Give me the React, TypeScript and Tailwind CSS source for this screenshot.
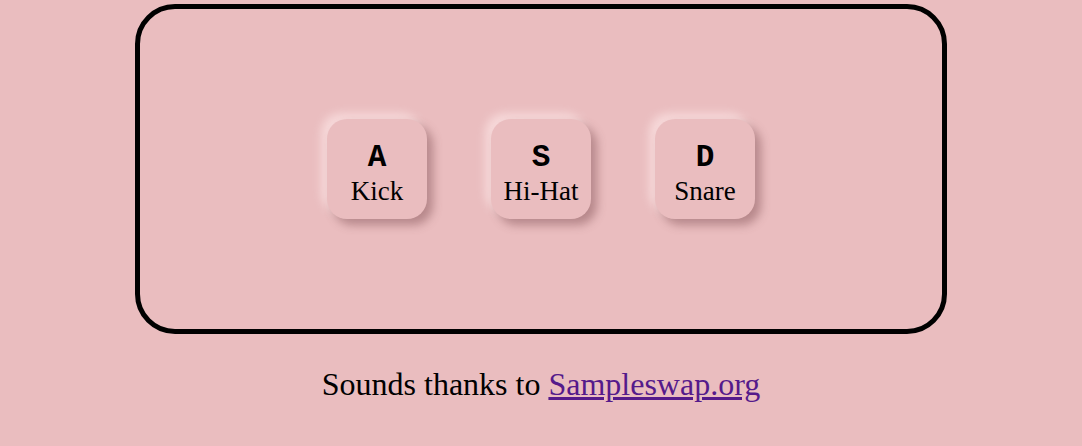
import React from 'react';

const pads = [
  { key: 'A', label: 'Kick' },
  { key: 'S', label: 'Hi-Hat' },
  { key: 'D', label: 'Snare' },
];

export default function App() {
  return (
    <div className="min-h-[446px] w-full bg-[#eabdbf] pt-[4px] font-['Liberation_Serif',serif] text-black">
      <div className="mx-auto flex h-[330px] w-[812px] items-center justify-center gap-[64px] rounded-[40px] border-[5px] border-black">
        {pads.map((p) => (
          <div
            key={p.key}
            className="flex h-[100px] w-[100px] flex-col items-center justify-center rounded-[20px] bg-[#eabdbf] pt-[12px] shadow-[6px_6px_10px_rgba(120,70,75,0.45),-6px_-6px_10px_rgba(255,235,235,0.6)]"
          >
            <span className="font-['Liberation_Mono',monospace] text-[31px] font-bold leading-[32px]">{p.key}</span>
            <span className="text-[27px] leading-[34px]">{p.label}</span>
          </div>
        ))}
      </div>
      <p className="mt-[28px] text-center text-[32px] leading-[44px]">
        Sounds thanks to{' '}
        <a href="#" className="text-[#551a8b] underline">Sampleswap.org</a>
      </p>
    </div>
  );
}
